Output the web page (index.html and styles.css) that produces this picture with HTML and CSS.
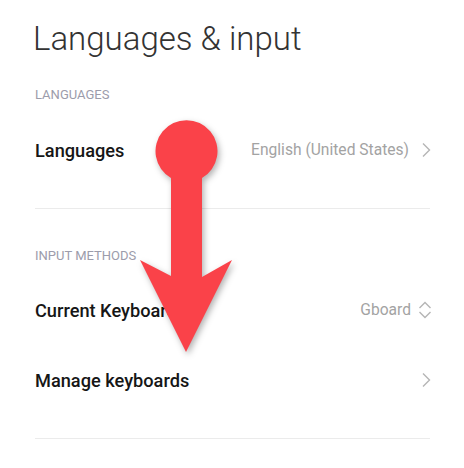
FILE: index.html
```html
<!DOCTYPE html>
<html lang="en">
<head>
    <meta charset="UTF-8">
    <meta name="viewport" content="width=device-width, initial-scale=1.0">
    <title>Languages &amp; input</title>
    <link rel="stylesheet" href="styles.css">
</head>
<body>
    <h1 class="title">Languages &amp; input</h1>

    <div class="group">
        <div class="group-label">LANGUAGES</div>
        <div class="row">
            <span class="row-name">Languages</span>
            <span class="row-value">English (United States)</span>
            <svg class="chevron" width="10" height="16" viewBox="0 0 10 16">
                <path d="M2 1.5 L8.5 8 L2 14.5" fill="none" stroke="#b5b5b5" stroke-width="1.4"/>
            </svg>
        </div>
    </div>

    <div class="group">
        <div class="group-label">INPUT METHODS</div>
        <div class="row">
            <span class="row-name">Current Keyboard</span>
            <span class="row-value short">Gboard</span>
            <svg class="updown" width="14" height="18" viewBox="0 0 14 18">
                <path d="M1.5 7 L7 1.5 L12.5 7 M1.5 11 L7 16.5 L12.5 11" fill="none" stroke="#b5b5b5" stroke-width="1.4"/>
            </svg>
        </div>
        <div class="row">
            <span class="row-name">Manage keyboards</span>
            <svg class="chevron" width="10" height="16" viewBox="0 0 10 16">
                <path d="M2 1.5 L8.5 8 L2 14.5" fill="none" stroke="#b5b5b5" stroke-width="1.4"/>
            </svg>
        </div>
    </div>

    <svg class="pointer" width="464" height="468" viewBox="0 0 464 468">
        <path d="M171 178 A31 31 0 1 1 202 178 L202 277 L232 260 L186 352 L140 260 L171 276 Z" fill="#fa4249"/>
    </svg>
</body>
</html>
```

FILE: styles.css
```css
body {
    margin: 0;
    padding: 0 34px 0 35px;
    font-family: Roboto, "Noto Sans", sans-serif;
    background: #fff;
    position: relative;
    height: 468px;
    overflow: hidden;
}
.title {
    margin: 0;
    padding-top: 19px;
    height: 40px;
    line-height: 40px;
    font-size: 33px;
    font-weight: 300;
    color: #333;
    margin-left: -2px;
}
.group {
    border-bottom: 1px solid #ebebeb;
    padding-bottom: 23px;
}
.group-label {
    margin-top: 28px;
    margin-bottom: 12px;
    line-height: 16px;
    font-size: 13px;
    color: #9c9cab;
}
.group + .group .group-label {
    margin-top: 39px;
    margin-bottom: 11px;
}
.row {
    height: 70px;
    display: flex;
    align-items: center;
}
.row-name {
    flex: 1;
    font-size: 18.2px;
    font-weight: 500;
    color: #161616;
}
.row-value {
    font-size: 15.6px;
    color: #a3a3a3;
    margin-right: 12px;
}
.row-value.short {
    margin-right: 7px;
}
.chevron {
    margin-right: -1px;
}
.updown {
    margin-right: -2px;
}
.pointer {
    position: absolute;
    left: 0;
    top: 0;
    pointer-events: none;
    filter: drop-shadow(2px 3px 3px rgba(0, 0, 0, 0.3));
}
```
